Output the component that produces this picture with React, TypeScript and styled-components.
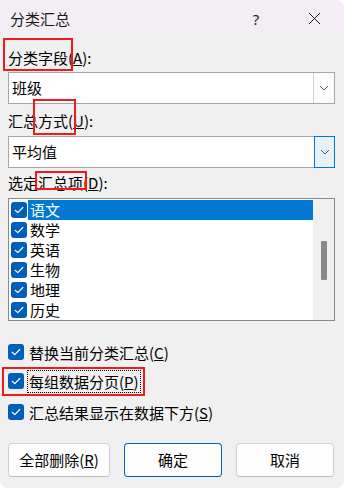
import React from 'react';
import styled, { createGlobalStyle } from 'styled-components';

const Global = createGlobalStyle`
  html, body { margin: 0; padding: 0; background: #ffffff; }
  body { font-family: "Noto Sans CJK SC", "Noto Sans", sans-serif; }
  * { box-sizing: border-box; }
`;

const FONT = `"Noto Sans CJK SC", "Noto Sans", sans-serif`;

const Window = styled.div`
  position: relative;
  width: 344px;
  height: 488px;
  background: #f0f0f0;
  border-radius: 0 8px 8px 8px;
  overflow: hidden;
  display: flex;
  flex-direction: column;
  font-family: ${FONT};
  font-size: 15px;
  color: #000;
`;

const TitleBar = styled.div`
  height: 37px;
  flex: none;
  display: flex;
  align-items: center;
  padding: 0 18px 0 10px;
  background: #f3eef3;
`;

const Title = styled.span`
  font-size: 15px;
  line-height: 20px;
  color: #1a1a1a;
`;

const TitleBtn = styled.div<{ $gap?: number }>`
  width: 24px;
  height: 24px;
  display: flex;
  align-items: center;
  justify-content: center;
  margin-left: ${p => p.$gap ?? 0}px;
  font-family: "Noto Sans", "DejaVu Sans", sans-serif;
  font-size: 15px;
  color: #1a1a1a;
`;

const Label = styled.div<{ $mt: number }>`
  height: 24px;
  line-height: 24px;
  padding-left: 8px;
  margin-top: ${p => p.$mt}px;
  white-space: nowrap;
`;

const Combo = styled.div<{ $mt: number }>`
  margin: ${p => p.$mt}px 9px 0 8px;
  height: 32px;
  border: 1px solid #a6a6a6;
  background: #fff;
  display: flex;
  align-items: stretch;
`;

const ComboText = styled.div`
  flex: 1;
  padding-left: 3px;
  line-height: 30px;
`;

const DropBtn = styled.div<{ $active?: boolean }>`
  width: 21px;
  margin: ${p => (p.$active ? '-1px -1px -1px 0' : '0')};
  border-left: 1px solid ${p => (p.$active ? '#0078d4' : '#d0d0d0')};
  border-top: ${p => (p.$active ? '1px solid #0078d4' : 'none')};
  border-right: ${p => (p.$active ? '1px solid #0078d4' : 'none')};
  border-bottom: ${p => (p.$active ? '1px solid #0078d4' : 'none')};
  background: ${p => (p.$active ? '#e5f1fb' : '#fcfcfc')};
  display: flex;
  align-items: center;
  justify-content: center;
`;

const ListBox = styled.div`
  margin: 3px 9px 0 8px;
  height: 123px;
  border: 1px solid #868a90;
  background: #fff;
  display: flex;
`;

const Items = styled.div`
  flex: 1;
  padding-top: 1px;
  overflow: hidden;
`;

const Item = styled.div`
  height: 20px;
  display: flex;
  align-items: center;
`;

const ItemText = styled.div<{ $sel?: boolean }>`
  flex: 1;
  height: 20px;
  line-height: 20px;
  padding-left: 2px;
  margin-left: 1px;
  background: ${p => (p.$sel ? '#0078d4' : 'transparent')};
  color: ${p => (p.$sel ? '#fff' : '#000')};
`;

const ScrollTrack = styled.div`
  width: 21px;
  background: #f0f0f0;
  padding: 42px 0 0 8px;
`;

const Thumb = styled.div`
  width: 6px;
  height: 39px;
  background: #8a8a8a;
  border-radius: 1px;
`;

const Box = styled.div<{ $ml?: number }>`
  width: 16px;
  height: 16px;
  flex: none;
  margin-left: ${p => p.$ml ?? 0}px;
  border-radius: 3px;
  background: #005fb8;
  display: flex;
  align-items: center;
  justify-content: center;
`;

const CheckRow = styled.div<{ $mt: number }>`
  margin-top: ${p => p.$mt}px;
  height: 24px;
  padding-left: 8px;
  display: flex;
  align-items: center;
  gap: 4px;
  white-space: nowrap;
`;

const CheckText = styled.span<{ $focus?: boolean }>`
  line-height: 21px;
  padding: 0 1px 0 1px;
  outline: ${p => (p.$focus ? '1px dotted #000' : 'none')};
`;

const Buttons = styled.div`
  margin-top: 19px;
  padding: 0 10px 0 8px;
  display: flex;
  gap: 14px;
`;

const Button = styled.div<{ $w: number; $primary?: boolean }>`
  width: ${p => p.$w}px;
  height: 34px;
  border-radius: 4px;
  border: 1px solid ${p => (p.$primary ? '#0067c0' : '#d0d0d0')};
  border-bottom-color: ${p => (p.$primary ? '#0058a8' : '#bdbdbd')};
  background: #fdfdfd;
  display: flex;
  align-items: center;
  justify-content: center;
  line-height: 20px;
`;

const Mark = styled.div<{ $l: number; $t: number; $w: number; $h: number }>`
  position: absolute;
  left: ${p => p.$l}px;
  top: ${p => p.$t}px;
  width: ${p => p.$w}px;
  height: ${p => p.$h}px;
  border: 2px solid #f0191e;
  pointer-events: none;
`;

const Check = () => (
  <svg width="10" height="8" viewBox="0 0 10 8">
    <path d="M1.2 4.3 L3.8 6.6 L8.8 1.5" fill="none" stroke="#fff" strokeWidth="1.2" strokeLinecap="round" strokeLinejoin="round" />
  </svg>
);

const Chevron = () => (
  <svg width="10" height="6" viewBox="0 0 10 6">
    <path d="M1 1 L5 5 L9 1" fill="none" stroke="#555" strokeWidth="1" />
  </svg>
);

const items = ['语文', '数学', '英语', '生物', '地理', '历史'];

export default function App() {
  return (
    <>
      <Global />
      <Window>
        <TitleBar>
          <Title>分类汇总</Title>
          <TitleBtn style={{ marginLeft: 'auto' }}>?</TitleBtn>
          <TitleBtn $gap={34}>
            <svg width="13" height="13" viewBox="0 0 13 13">
              <path d="M1 1 L12 12 M12 1 L1 12" stroke="#1a1a1a" strokeWidth="1" />
            </svg>
          </TitleBtn>
        </TitleBar>

        <Label $mt={9}>分类字段(<u>A</u>):</Label>
        <Combo $mt={2}>
          <ComboText>班级</ComboText>
          <DropBtn><Chevron /></DropBtn>
        </Combo>

        <Label $mt={5}>汇总方式(<u>U</u>):</Label>
        <Combo $mt={3}>
          <ComboText>平均值</ComboText>
          <DropBtn $active><Chevron /></DropBtn>
        </Combo>

        <Label $mt={3}>选定汇总项(<u>D</u>):</Label>
        <ListBox>
          <Items>
            {items.map((t, i) => (
              <Item key={t}>
                <Box $ml={2}><Check /></Box>
                <ItemText $sel={i === 0}>{t}</ItemText>
              </Item>
            ))}
          </Items>
          <ScrollTrack><Thumb /></ScrollTrack>
        </ListBox>

        <CheckRow $mt={19}>
          <Box><Check /></Box>
          <CheckText>替换当前分类汇总(<u>C</u>)</CheckText>
        </CheckRow>
        <CheckRow $mt={5}>
          <Box><Check /></Box>
          <CheckText $focus>每组数据分页(<u>P</u>)</CheckText>
        </CheckRow>
        <CheckRow $mt={7}>
          <Box><Check /></Box>
          <CheckText>汇总结果显示在数据下方(<u>S</u>)</CheckText>
        </CheckRow>

        <Buttons>
          <Button $w={102}>全部删除(<u>R</u>)</Button>
          <Button $w={98} $primary>确定</Button>
          <Button $w={98}>取消</Button>
        </Buttons>

        <Mark $l={3} $t={38} $w={70} $h={33} />
        <Mark $l={33} $t={99} $w={43} $h={36} />
        <Mark $l={35} $t={171} $w={52} $h={19} />
        <Mark $l={2} $t={367} $w={143} $h={29} />
      </Window>
    </>
  );
}
